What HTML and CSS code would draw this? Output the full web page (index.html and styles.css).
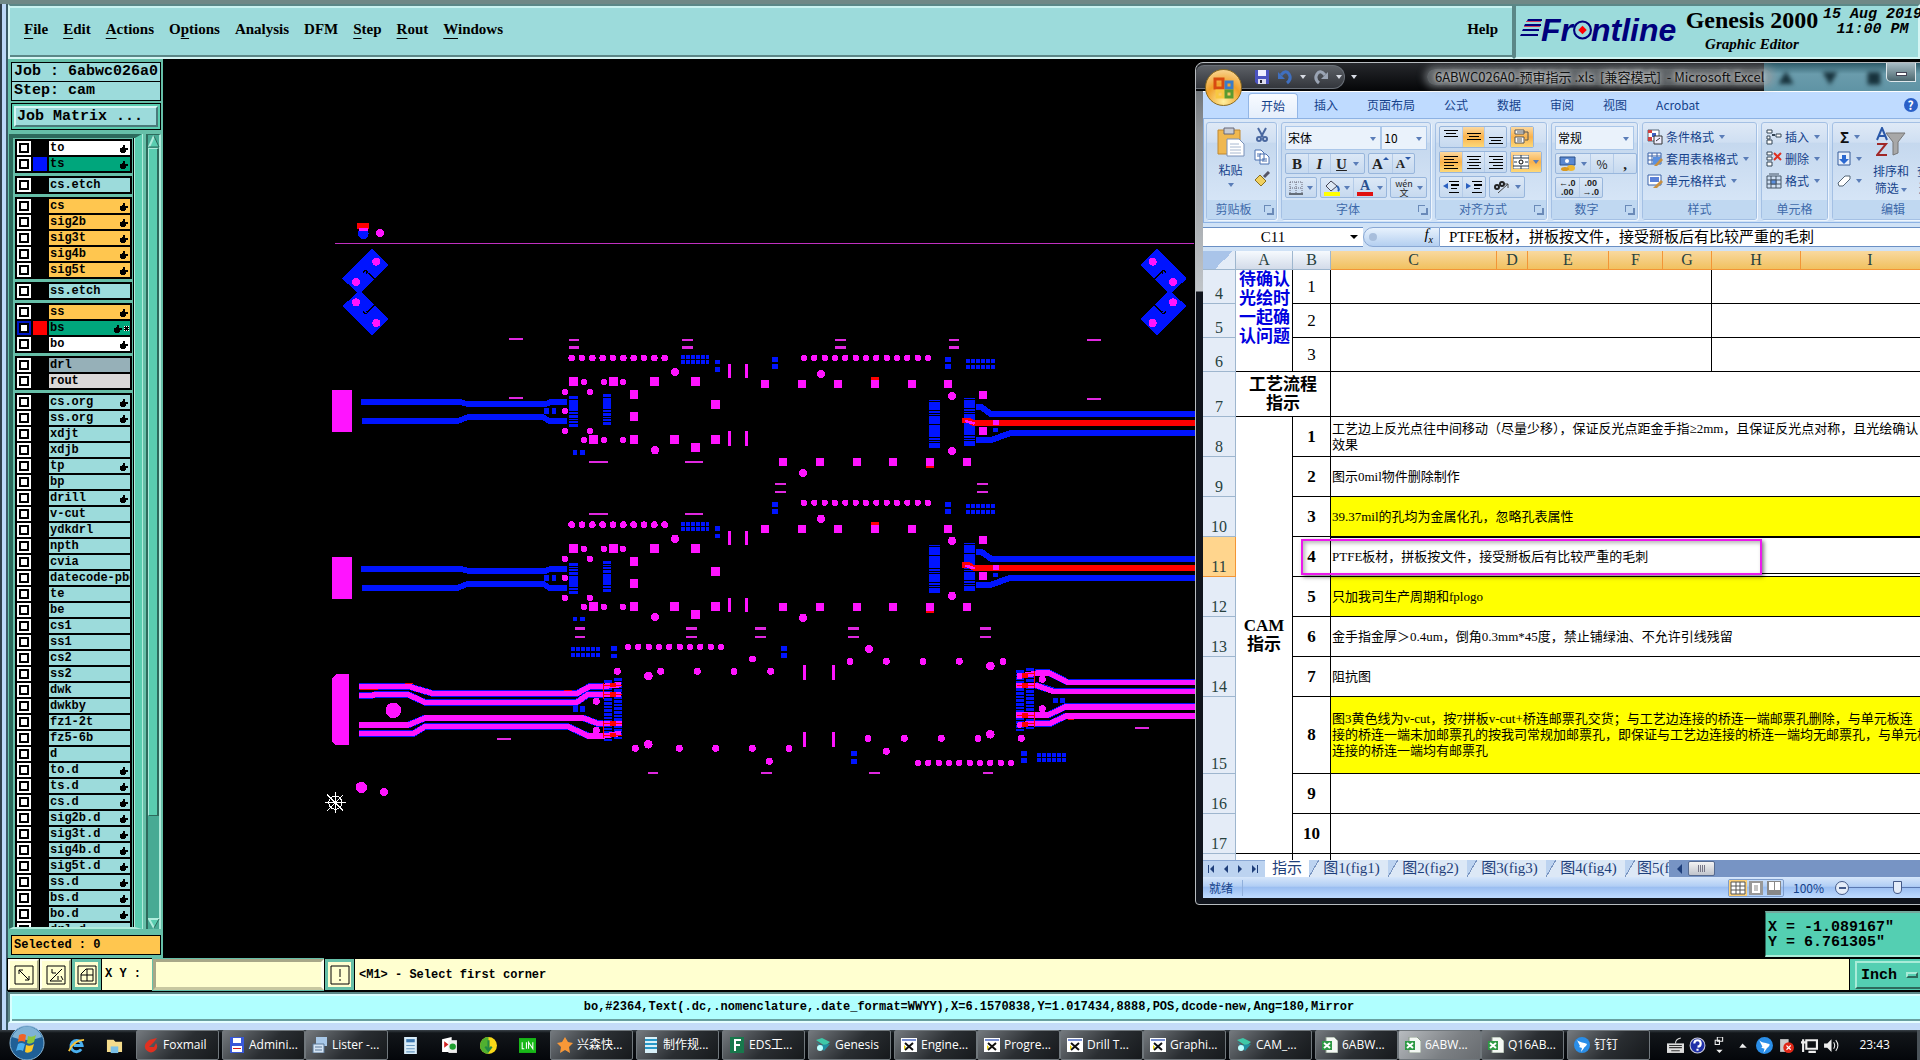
FILE: index.html
```html
<!DOCTYPE html>
<html lang="zh-CN">
<head>
  <meta charset="UTF-8">
  <meta name="viewport" content="width=device-width, initial-scale=1.0">
  <title>Genesis 2000 - Graphic Editor</title>
  <link rel="stylesheet" href="styles.css">
</head>
<body>

  <!-- shared icons -->
  <svg class="defs" aria-hidden="true">
    <symbol id="hand" viewBox="0 0 8 8"><path d="M0 3h2V2h1V0h2v3h3v2H6v2H5v1H1V7H0z"/></symbol>
    <symbol id="rows" viewBox="0 0 14 8"><path d="M0 0h14v1H0zM2 3h10v1H2zM0 6h14v1H0z"/></symbol>
    <symbol id="lines-l" viewBox="0 0 14 13"><path d="M0 0h14v1H0zM0 3h10v1H0zM0 6h14v1H0zM0 9h10v1H0zM0 12h14v1H0z"/></symbol>
    <symbol id="lines-c" viewBox="0 0 14 13"><path d="M0 0h14v1H0zM2 3h10v1H2zM0 6h14v1H0zM2 9h10v1H2zM0 12h14v1H0z"/></symbol>
    <symbol id="lines-r" viewBox="0 0 14 13"><path d="M0 0h14v1H0zM4 3h10v1H4zM0 6h14v1H0zM4 9h10v1H4zM0 12h14v1H0z"/></symbol>
    <symbol id="xls" viewBox="0 0 16 16"><path d="M4 0h8l4 4v12H4z" fill="#f4f8f4" stroke="#8a9a8a"/><path d="M0 4h10v9H0z" fill="#2f9a45"/><path d="M2 6l6 5M8 6l-6 5" stroke="#fff" stroke-width="2"/></symbol>
    <symbol id="xwin" viewBox="0 0 16 16"><path d="M0 1h16v14H0z" fill="#fff"/><path d="M1 2h14v2H1z" fill="#7a8fd0"/><path d="M4 6l8 7M12 6l-8 7" stroke="#111" stroke-width="2"/><path d="M3 8l2 2-2 3z" fill="#e8d000"/></symbol>
    <symbol id="bird" viewBox="0 0 16 16"><circle cx="8" cy="8" r="8" fill="#2a8ee8"/><path d="M3 3c3 3 7 2 10 4-1 3-3 3-3 4l-3 4 1-4-3-1 1-1z" fill="#fff"/></symbol>
    <symbol id="gen" viewBox="0 0 16 16"><path d="M1 3l6-2 8 4-5 4z" fill="#3fc8a8"/><path d="M1 5l5 3 9-1-6 7z" fill="#1f8fa0"/><circle cx="5" cy="11" r="3" fill="#bff"/></symbol>
  </svg>

  <div class="app">
    <header class="top">
      <nav class="menubar">
        <button><u>F</u>ile</button>
        <button><u>E</u>dit</button>
        <button><u>A</u>ctions</button>
        <button>O<u>p</u>tions</button>
        <button>Analysis</button>
        <button>DFM</button>
        <button><u>S</u>tep</button>
        <button><u>R</u>out</button>
        <button><u>W</u>indows</button>
        <button class="help">Help</button>
      </nav>
      <div class="brand">
        <div class="logo">
          <svg width="22" height="24" viewBox="0 0 22 24"><path d="M8 1h14v2H7zM5 6h16v2H4zM3 11h16v2H2zM1 16h17v2H0z" fill="#00007c"/><path d="M6 3h15v1H6zM4 8h16v1H4z" fill="#d04060"/></svg>
          <span>Fr</span><svg width="19" height="22" viewBox="0 0 18 20"><circle cx="9" cy="10" r="8" fill="none" stroke="#00007c" stroke-width="2"/><path d="M9 6l4 4-4 4-4-4z" fill="#f00"/></svg><span>ntline</span>
        </div>
        <div class="product"><strong>Genesis 2000</strong><em>Graphic Editor</em></div>
        <div class="date">15 Aug 2019<br>11:00 PM</div>
      </div>
    </header>

    <div class="workspace">
      <aside class="sidebar">
        <div class="info">Job : 6abwc026a0</div>
        <div class="info">Step: cam</div>
        <div class="matrix"><button>Job Matrix ...</button></div>
        <div class="layers">
          <div class="list">
            <div class="group">
              <label class="row white"><input type="checkbox"><i></i><span>to</span><svg><use href="#hand"/></svg></label>
              <label class="row green"><input type="checkbox"><i class="blue"></i><span>ts</span><svg><use href="#hand"/></svg></label>
            </div>
            <div class="group">
              <label class="row"><input type="checkbox"><i></i><span>cs.etch</span></label>
            </div>
            <div class="group">
              <label class="row gold"><input type="checkbox"><i></i><span>cs</span><svg><use href="#hand"/></svg></label>
              <label class="row gold"><input type="checkbox"><i></i><span>sig2b</span><svg><use href="#hand"/></svg></label>
              <label class="row gold"><input type="checkbox"><i></i><span>sig3t</span><svg><use href="#hand"/></svg></label>
              <label class="row gold"><input type="checkbox"><i></i><span>sig4b</span><svg><use href="#hand"/></svg></label>
              <label class="row gold"><input type="checkbox"><i></i><span>sig5t</span><svg><use href="#hand"/></svg></label>
            </div>
            <div class="group">
              <label class="row"><input type="checkbox"><i></i><span>ss.etch</span></label>
            </div>
            <div class="group">
              <label class="row gold"><input type="checkbox"><i></i><span>ss</span><svg><use href="#hand"/></svg></label>
              <label class="row green work"><input type="checkbox"><i class="red"></i><span>bs</span><svg><use href="#hand"/></svg><b></b></label>
              <label class="row white"><input type="checkbox"><i></i><span>bo</span><svg><use href="#hand"/></svg></label>
            </div>
            <div class="group">
              <label class="row slate"><input type="checkbox"><i></i><span>drl</span></label>
              <label class="row grey"><input type="checkbox"><i></i><span>rout</span></label>
            </div>
            <div class="group">
              <label class="row"><input type="checkbox"><i></i><span>cs.org</span><svg><use href="#hand"/></svg></label>
              <label class="row"><input type="checkbox"><i></i><span>ss.org</span><svg><use href="#hand"/></svg></label>
              <label class="row"><input type="checkbox"><i></i><span>xdjt</span></label>
              <label class="row"><input type="checkbox"><i></i><span>xdjb</span></label>
              <label class="row"><input type="checkbox"><i></i><span>tp</span><svg><use href="#hand"/></svg></label>
              <label class="row"><input type="checkbox"><i></i><span>bp</span></label>
              <label class="row"><input type="checkbox"><i></i><span>drill</span><svg><use href="#hand"/></svg></label>
              <label class="row"><input type="checkbox"><i></i><span>v-cut</span></label>
              <label class="row"><input type="checkbox"><i></i><span>ydkdrl</span></label>
              <label class="row"><input type="checkbox"><i></i><span>npth</span></label>
              <label class="row"><input type="checkbox"><i></i><span>cvia</span></label>
              <label class="row"><input type="checkbox"><i></i><span>datecode-pbo</span></label>
              <label class="row"><input type="checkbox"><i></i><span>te</span></label>
              <label class="row"><input type="checkbox"><i></i><span>be</span></label>
              <label class="row"><input type="checkbox"><i></i><span>cs1</span></label>
              <label class="row"><input type="checkbox"><i></i><span>ss1</span></label>
              <label class="row"><input type="checkbox"><i></i><span>cs2</span></label>
              <label class="row"><input type="checkbox"><i></i><span>ss2</span></label>
              <label class="row"><input type="checkbox"><i></i><span>dwk</span></label>
              <label class="row"><input type="checkbox"><i></i><span>dwkby</span></label>
              <label class="row"><input type="checkbox"><i></i><span>fz1-2t</span></label>
              <label class="row"><input type="checkbox"><i></i><span>fz5-6b</span></label>
              <label class="row"><input type="checkbox"><i></i><span>d</span></label>
              <label class="row"><input type="checkbox"><i></i><span>to.d</span><svg><use href="#hand"/></svg></label>
              <label class="row"><input type="checkbox"><i></i><span>ts.d</span><svg><use href="#hand"/></svg></label>
              <label class="row"><input type="checkbox"><i></i><span>cs.d</span><svg><use href="#hand"/></svg></label>
              <label class="row"><input type="checkbox"><i></i><span>sig2b.d</span><svg><use href="#hand"/></svg></label>
              <label class="row"><input type="checkbox"><i></i><span>sig3t.d</span><svg><use href="#hand"/></svg></label>
              <label class="row"><input type="checkbox"><i></i><span>sig4b.d</span><svg><use href="#hand"/></svg></label>
              <label class="row"><input type="checkbox"><i></i><span>sig5t.d</span><svg><use href="#hand"/></svg></label>
              <label class="row"><input type="checkbox"><i></i><span>ss.d</span><svg><use href="#hand"/></svg></label>
              <label class="row"><input type="checkbox"><i></i><span>bs.d</span><svg><use href="#hand"/></svg></label>
              <label class="row"><input type="checkbox"><i></i><span>bo.d</span><svg><use href="#hand"/></svg></label>
              <label class="row"><input type="checkbox"><i></i><span>drl.d</span><svg><use href="#hand"/></svg></label>
            </div>
          </div>
          <div class="scroll">
            <svg width="12" height="13" viewBox="0 0 12 13"><path d="M6 1l5 11H1z" fill="#5acdb0"/><path d="M6 1L1 12" stroke="#b0ecdc" stroke-width="2"/><path d="M6 1l5 11H1" fill="none" stroke="#2d6a5c"/></svg>
            <div class="thumb"></div>
            <div class="trough"></div>
            <svg width="12" height="11" viewBox="0 0 12 11"><path d="M1 1h10L6 10z" fill="#5acdb0"/><path d="M11 1H1l5 9" fill="none" stroke="#b0ecdc" stroke-width="2"/><path d="M11 1L6 10" stroke="#2d6a5c"/></svg>
          </div>
        </div>
        <div class="info selected">Selected : 0</div>
      </aside>

      <!-- board, three drawing units to one pixel -->
      <main class="canvas">
        <svg viewBox="-471 -456 5271 2694" preserveAspectRatio="xMinYMin meet" shape-rendering="crispEdges" fill="none" stroke="#ff14ff">
          <defs>
            <g id="left-unit">
              <path d="M36 537h60v126H36z" fill="#ff14ff" stroke="none"/>
              <g stroke="#0014ff">
                <path d="M123 573H420l22 6H678l14-6H741M126 630H414l30-12H669l18 12H741" stroke-width="17"/>
                <path d="M1083 438h84M1083 453h84" stroke-width="12" stroke-dasharray="12 3"/>
                <path d="M760 555v93M861 549v96" stroke-width="25" stroke-dasharray="10 2 5 2 7 2"/>
                <path d="M672 600h15M696 600h12" stroke-width="18"/>
                <path d="M759 724h12M780 724h15M1185 453h15M1185 475h15" stroke-width="14"/>
              </g>
              <path d="M755 441h280" stroke-width="20" stroke-linecap="round" stroke-dasharray="0 31"/>
              <path d="M1065 483h0M1005 718h0" stroke-width="25" stroke-linecap="round"/>
              <path d="M792 513h0M852 513h0M909 513h0M735 543h0M810 543h0M735 600h0M735 660h0M810 660h0M792 687h0M852 687h0M909 687h0" stroke-width="19" stroke-linecap="round"/>
              <path d="M746 511h27M867 511h27M990 511h27M1113 511h27M930 550h24M930 616h24M1173 580h27M807 685h27M930 685h24M1050 685h27M1173 685h27M1113 710h27" stroke-width="27"/>
              <path d="M1228 459v42M1280 459v42M1228 660v44M1280 660v44" stroke-width="8"/>
            </g>
            <g id="right-unit">
              <g stroke="#0014ff">
                <path d="M678 450h90M678 468h90" stroke-width="12" stroke-dasharray="12 3"/>
                <path d="M96 446h18M96 466h18M615 446h18M615 466h18" stroke-width="15"/>
                <path d="M583 567v144M689 561v144" stroke-width="32" stroke-dasharray="4 2 24 3 6 2"/>
                <path d="M708 588h15l30 21H1380M708 687h45l60-21H1380" stroke-width="18"/>
                <path d="M759 657h15" stroke-width="12"/>
              </g>
              <path d="M666 628h20l14 8H1380" stroke="#f00" stroke-width="17"/>
              <path d="M393 503h24M558 765h24" stroke="#f00" stroke-width="11"/>
              <path d="M676 630l28 8" stroke-width="8"/>
              <path d="M192 441h374" stroke-width="19" stroke-linecap="round" stroke-dasharray="0 31"/>
              <path d="M243 489h0M636 555h0M636 720h0M189 786h0" stroke-width="25" stroke-linecap="round"/>
              <path d="M63 519h24M174 519h24M282 519h24M393 519h24M504 519h24M612 519h24M717 552h24M717 660h24M117 753h24M228 753h24M339 753h24M447 753h24M558 753h24M669 753h24" stroke-width="24"/>
              <path d="M759 634h18" stroke-width="15"/>
            </g>
            <g id="coupon">
              <path d="M156 113l50 50-89 87-50-47zM118 238l88 87-50 50-89-89z" fill="#0014ff" stroke="none"/>
              <path d="M131 187q0-10 8-8q6 4 0 8M142 184l28 26M131 300q0 10 8 8q6-4 0-8M142 304l28-28" stroke="#000" stroke-width="4"/>
              <path d="M169 152h0M108 213h0M108 274h0M169 336h0" stroke-width="24" stroke-linecap="round"/>
            </g>
          </defs>

          <path d="M111 37h36v18h-36z" fill="#f00" stroke="none"/>
          <circle cx="130" cy="68" r="16" fill="#0014ff" stroke="none"/>
          <path d="M120 55h20" stroke-width="9" stroke-linecap="round"/>
          <path d="M180 66h0" stroke-width="25" stroke-linecap="round"/>
          <path d="M45 97H2622" stroke="#c030c0" stroke-width="3"/>
          <use href="#coupon"/>
          <use href="#coupon" transform="translate(2667 0) scale(-1 1)"/>

          <use href="#left-unit"/>
          <use href="#left-unit" y="500"/>
          <use href="#right-unit" x="1260"/>
          <use href="#right-unit" x="1260" y="434"/>

          <path d="M567 384h42M567 561h42M747 387h30M747 409h30M1086 386h33M1086 409h33M807 753h57M1095 753h54
            M1545 386h33M1545 409h33M1887 386h30M1887 409h30M2301 386h42M2301 563h42M1365 819h33M1971 819h33
            M1365 843h33M1971 843h33M1305 1252h33M1305 1277h33M1584 1252h33M1584 1277h33M1980 1252h33M1980 1277h33
            M2445 1551h42M1323 1686h33M1647 1686h33M1989 1686h30
            M807 909h57M1095 909h54M765 1252h30M765 1277h30M1098 1252h33M1098 1277h33M531 1583h42M984 1686h30" stroke="#e028e0" stroke-width="7"/>

          <!-- third unit, left half -->
          <g transform="translate(0 840)">
            <path d="M36 562l14-13h37v213H46l-10-12z" fill="#ff14ff" stroke="none"/>
            <g stroke="#0014ff">
              <path d="M753 474h90M753 492h90" stroke-width="12" stroke-dasharray="12 3"/>
              <path d="M873 473h18M873 495h18" stroke-width="14"/>
              <path d="M864 567v183M894 561v183" stroke-width="24" stroke-dasharray="8 3"/>
              <path d="M759 654h15M780 654h15" stroke-width="18"/>
              <path d="M117 586H265l75 22H770l40-22h38M117 614h30l20-3h98l50 23H770l35-24h43M117 702H265l50-21H790l45 17h13M117 728H280l35-21H745l60 28h43" stroke-width="20"/>
            </g>
            <path d="M117 586H265l75 22H770l40-22h40l53-5M117 614h30l20-3h98l50 23H770l35-24h98M117 702H265l50-21H790l45 17h70M117 728H280l35-21H745l60 28h45l53-8" stroke-width="16"/>
            <path d="M870 582h18M870 611h18M870 698h18M870 732h18" stroke="#f00" stroke-width="14"/>
            <path d="M850 576v48M850 690v50M850 582h55M850 611h55M850 698h55M850 732h55M120 596h54M255 577h24M732 598h24" stroke="#f00" stroke-width="3"/>
            <path d="M924 468h280" stroke-width="19" stroke-linecap="round" stroke-dasharray="0 31"/>
            <path d="M892 541h0M1022 541h0M1132 541h0M1242 541h0M1297 504h0M829 631h0M829 718h0M946 772h0M1078 772h0M1187 772h0M1297 772h0" stroke-width="21" stroke-linecap="round"/>
            <path d="M985 555h0M985 760h0M192 903h0" stroke-width="26" stroke-linecap="round"/>
            <path d="M124 889h0" stroke-width="34" stroke-linecap="round"/>
            <path d="M220 658h0" stroke-width="47" stroke-linecap="round"/>
            <g stroke="#fff" stroke-width="3"><circle cx="46" cy="935" r="20"/><path d="M15 935h62M46 904v62M22 911l48 48M70 911l-48 48"/></g>
          </g>

          <!-- third unit, right half -->
          <g transform="translate(1260 840)">
            <g stroke="#0014ff">
              <path d="M891 792h90M891 807h90" stroke-width="12" stroke-dasharray="12 3"/>
              <path d="M123 473h18M123 493h18M333 787h18M333 811h18M843 787h18M843 808h18M939 628h15M960 628h15" stroke-width="15"/>
              <path d="M840 537v183M870 531v183" stroke-width="24" stroke-dasharray="8 3"/>
              <path d="M886 545h40l55 28H1380M886 582l55 18H1380M886 672h40l50-25H1380M886 698h45l45-23H1380" stroke-width="20"/>
            </g>
            <path d="M832 555h10l50-9h35l55 28H1380M828 584h62l50 17H1380M828 672h97l50-24H1380M832 703l40-6h60l45-22H1380" stroke-width="16"/>
            <path d="M846 552h18M846 584h18M846 672h18M846 700h18" stroke="#f00" stroke-width="15"/>
            <path d="M884 540v50M884 662v46M830 584h54M830 672h54M850 548h34M850 697h34M984 685h18" stroke="#f00" stroke-width="3"/>
            <path d="M534 816h280" stroke-width="19" stroke-linecap="round" stroke-dasharray="0 31"/>
            <path d="M92 541h0M330 511h0M439 511h0M549 511h0M658 511h0M789 511h0M907 565h0M907 653h0M384 742h0M493 742h0M604 742h0M714 742h0M844 742h0M439 781h0M147 772h0M88 811h0" stroke-width="21" stroke-linecap="round"/>
            <path d="M387 474h0M751 525h0M751 730h0" stroke-width="26" stroke-linecap="round"/>
            <path d="M193 522v45M280 522v45M193 723v45M280 723v45" stroke-width="8"/>
          </g>
        </svg>
        <div class="coords">X = -1.089167"<br>Y = 6.761305"</div>
      </main>
    </div>

    <div class="command">
      <button class="tool" aria-label="Corner to corner"><svg viewBox="0 0 20 20"><path d="M1 1h18v18H1zM5 5l10 10M5 9V5h4M15 11v4h-4"/></svg></button>
      <button class="tool" aria-label="Angle"><svg viewBox="0 0 20 20"><path d="M1 1h18v18H1zM4 16L16 4M4 16h12M6 4v4h4M12 11v4M15 11l2 4"/></svg></button>
      <button class="tool on" aria-label="Grid"><svg viewBox="0 0 20 20"><path d="M1 1h18v18H1zM4 16V9l5-5h7v12zM4 10h12M10 4v12"/></svg></button>
      <label class="xy" for="xy">X Y :</label>
      <input type="text" id="xy">
      <button class="tool on" aria-label="Confirm"><svg viewBox="0 0 20 20"><path d="M1 1h18v18H1zM10 4v8M10 14v2"/></svg></button>
      <span class="message">&lt;M1&gt; - Select first corner</span>
      <div class="unit"><button>Inch <i></i></button></div>
    </div>
    <div class="status">bo,#2364,Text(.dc,.nomenclature,.date_format=WWYY),X=6.1570838,Y=1.017434,8888,POS,dcode-new,Ang=180,Mirror</div>
  </div>

  <!-- Excel window -->
  <section class="excel">
    <div class="title">
      <div class="qat">
        <svg width="16" height="16" viewBox="0 0 16 16"><path d="M1 1h14v14H3l-2-2z" fill="#4a52c0"/><path d="M4 1h8v6H4z" fill="#eef"/><path d="M4 10h8v5H4z" fill="#dde"/><path d="M6 11h2v3H6z" fill="#223"/></svg>
        <svg width="16" height="16" viewBox="0 0 16 16"><path d="M4 6q5-6 8-1t-2 9" fill="none" stroke="#3f6fc0" stroke-width="3"/><path d="M1 3v7h7z" fill="#3f6fc0"/></svg>
        <i class="dd light"></i>
        <svg width="16" height="16" viewBox="0 0 16 16"><path d="M12 6q-5-6-8-1t2 9" fill="none" stroke="#9aa4b4" stroke-width="3"/><path d="M15 3v7H8z" fill="#9aa4b4"/></svg>
        <i class="dd light"></i>
      </div>
      <i class="dd light more"></i>
      <div class="glass"><i>▲</i><i>▼</i><i>■</i></div>
      <span class="caption">6ABWC026A0-预审指示 .xls&nbsp; [兼容模式]&nbsp; - Microsoft Excel</span>
      <button class="min" aria-label="Minimize"><i></i></button>
    </div>
    <button class="orb" aria-label="Office">
      <svg width="24" height="24" viewBox="0 0 24 24" fill="none" stroke-width="3"><path d="M3 3h8v9H3z" stroke="#d84a10"/><path d="M14 6h6v6h-6z" stroke="#3a7cc8"/><path d="M5 15h6v6H5z" stroke="#f8c840"/><path d="M14 15h6v6h-6z" stroke="#5a9a30"/></svg>
    </button>

    <nav class="tabs">
      <a class="on" href="#">开始</a><a href="#">插入</a><a href="#">页面布局</a><a href="#">公式</a><a href="#">数据</a><a href="#">审阅</a><a href="#">视图</a><a href="#">Acrobat</a>
      <span class="q">?</span>
    </nav>

    <div class="ribbon">
      <div class="panel clip">
        <div class="body">
          <button class="big">
            <svg width="28" height="30" viewBox="0 0 28 30"><path d="M1 3h22v24H1z" fill="#f0b850" stroke="#c08830"/><path d="M7 1h10v6H7z" fill="#c8ccd4" stroke="#667"/><path d="M10 12h12l5 5v12H10z" fill="#fff" stroke="#7890b8"/><path d="M13 17h9M13 20h11M13 23h11M13 26h11" stroke="#a8b8d0"/></svg>
            <span>粘贴</span><i class="dd"></i>
          </button>
          <div class="stack">
            <svg width="16" height="16" viewBox="0 0 16 16" fill="none" stroke="#4a68a0" stroke-width="2"><path d="M4 1l5 9M12 1L7 10"/><circle cx="5" cy="12" r="2"/><circle cx="11" cy="12" r="2"/></svg>
            <svg width="16" height="16" viewBox="0 0 16 16" fill="#fff" stroke="#4a70b0"><path d="M1 1h6l3 3v7H1zM6 5h6l3 3v7H6z"/><path d="M3 5h4M3 7h3M8 10h5M8 12h5"/></svg>
            <svg width="16" height="16" viewBox="0 0 16 16"><path d="M15 1l-5 5" stroke="#556" stroke-width="3"/><path d="M6 4l6 6-5 5-6-6z" fill="#f0d060" stroke="#8a7020"/></svg>
          </div>
        </div>
        <div class="name">剪贴板<i class="launch"></i></div>
      </div>

      <div class="panel font">
        <div class="body col">
          <div class="line combos">
            <label class="combo wide"><select aria-label="字体"><option>宋体</option></select></label><label class="combo"><select aria-label="字号"><option>10</option></select></label>
          </div>
          <div class="line">
            <div class="set"><button class="b">B</button><button class="i">I</button><button class="u">U<i class="dd"></i></button></div>
            <div class="set"><button class="serif">A<i class="up"></i></button><button class="serif small">A<i class="up down"></i></button></div>
          </div>
          <div class="line">
            <div class="set"><button aria-label="边框"><svg width="14" height="14" viewBox="0 0 14 14"><path d="M1 1h12M1 7h12M1 1v12M7 1v12M13 1v12" stroke="#667" stroke-dasharray="1 1"/><path d="M0 13h14" stroke="#000"/></svg><i class="dd"></i></button></div>
            <div class="set"><button aria-label="填充颜色"><svg width="16" height="16" viewBox="0 0 16 16"><path d="M7 1l6 5-6 5-5-5z" fill="#dde8f4" stroke="#445"/><path d="M13 6q3 3 1 5" stroke="#2a60b0" stroke-width="2" fill="none"/><path d="M0 12h16v4H0z" fill="#ff0"/></svg><i class="dd"></i></button><button class="ink"><span>A</span><i class="dd"></i></button></div>
            <div class="set"><button class="wen"><span>wén</span><span>文</span><i class="dd"></i></button></div>
          </div>
        </div>
        <div class="name">字体<i class="launch"></i></div>
      </div>

      <div class="panel align">
        <div class="body col">
          <div class="line">
            <div class="set"><button class="at-top" aria-label="顶端对齐"><svg class="rows"><use href="#rows"/></svg></button><button class="hot" aria-label="垂直居中"><svg class="rows"><use href="#rows"/></svg></button><button class="at-bottom" aria-label="底端对齐"><svg class="rows"><use href="#rows"/></svg></button></div>
            <div class="set"><button class="hot" aria-label="自动换行"><svg width="16" height="16" viewBox="0 0 16 16" fill="none" stroke="#555"><path d="M1 1h9v4H1zM1 8h9v6H1z" fill="#fff"/><path d="M3 3h11v8h-3M3 10h5M3 12h5"/></svg></button></div>
          </div>
          <div class="line">
            <div class="set"><button class="hot" aria-label="左对齐"><svg class="al"><use href="#lines-l"/></svg></button><button aria-label="居中"><svg class="al"><use href="#lines-c"/></svg></button><button aria-label="右对齐"><svg class="al"><use href="#lines-r"/></svg></button></div>
            <div class="set"><button class="hot merge" aria-label="合并"><svg width="16" height="14" viewBox="0 0 16 14"><path d="M0 0h16v14H0z" fill="#fff" stroke="#567"/><path d="M0 3h16M0 11h16M8 0v3M8 11v3M1 7h3M12 7h3" stroke="#234"/><circle cx="8" cy="7" r="2" fill="none" stroke="#000"/></svg><i class="dd"></i></button></div>
          </div>
          <div class="line">
            <div class="set"><button aria-label="减少缩进"><svg width="16" height="12" viewBox="0 0 16 12"><path d="M6 0h10v1H6zM8 3h8v2H8zM8 7h6v1H8zM6 11h10v1H6z"/><path d="M0 5l5-3v6z" fill="#2a60c0"/></svg></button><button aria-label="增加缩进"><svg width="16" height="12" viewBox="0 0 16 12"><path d="M6 0h10v1H6zM8 3h8v2H8zM8 7h6v1H8zM6 11h10v1H6z"/><path d="M5 5L0 2v6z" fill="#2a60c0"/></svg></button></div>
            <div class="set"><button class="serif small" aria-label="方向"><svg width="18" height="16" viewBox="0 0 18 16"><path d="M5 14L15 5M15 9V5h-4" stroke="#444" fill="none"/><circle cx="4" cy="8" r="2" fill="none" stroke="#222" stroke-width="2"/><circle cx="9" cy="5" r="2" fill="none" stroke="#222" stroke-width="2"/></svg><i class="dd"></i></button></div>
          </div>
        </div>
        <div class="name">对齐方式<i class="launch"></i></div>
      </div>

      <div class="panel number">
        <div class="body col">
          <div class="line combos"><label class="combo full"><select aria-label="数字格式"><option>常规</option></select></label></div>
          <div class="line"><div class="set"><button aria-label="货币"><svg width="18" height="16" viewBox="0 0 18 16"><path d="M1 1h15v8H1z" fill="#5a88d0" stroke="#2a508a"/><circle cx="8" cy="5" r="2" fill="#fff"/><ellipse cx="12" cy="12" rx="4" ry="3" fill="#f0b830"/><ellipse cx="6" cy="13" rx="4" ry="2" fill="#d89820"/></svg><i class="dd"></i></button><button class="pc">%</button><button class="b">,</button></div></div>
          <div class="line"><div class="set tiny"><button><span>←.0<br>.00</span></button><button><span>.00<br>→.0</span></button></div></div>
        </div>
        <div class="name">数字<i class="launch"></i></div>
      </div>

      <div class="panel styles">
        <div class="body col cmds">
          <button><svg width="16" height="16" viewBox="0 0 16 16"><path d="M1 1h11v11H1z" fill="#fff" stroke="#567"/><path d="M1 1h4v3H1zM1 8h4v4H1z" fill="#d04040"/><path d="M5 4h4v4H5z" fill="#4060c0"/><path d="M7 7h8v8H7z" fill="#eef" stroke="#333"/><path d="M9 12l4-3" stroke="#333"/></svg>条件格式<i class="dd"></i></button>
          <button><svg width="16" height="16" viewBox="0 0 16 16"><path d="M1 2h13v11H1z" fill="#fff" stroke="#3a62a8"/><path d="M1 5h13M1 9h13M5 2v11M10 2v11" stroke="#3a62a8"/><path d="M6 6h8v7H6z" fill="#5a90e0"/><path d="M7 15l7-8 2 2-6 6z" fill="#c89040"/></svg>套用表格格式<i class="dd"></i></button>
          <button><svg width="16" height="16" viewBox="0 0 16 16"><path d="M1 2h13v10H1z" fill="#fff" stroke="#3a62a8"/><path d="M3 4h9v5H3z" fill="#5a80d8"/><path d="M6 15l8-8 2 2-6 6z" fill="#c89040"/></svg>单元格样式<i class="dd"></i></button>
        </div>
        <div class="name">样式</div>
      </div>

      <div class="panel cells">
        <div class="body col cmds">
          <button><svg width="16" height="16" viewBox="0 0 16 16" fill="#fff" stroke="#345"><path d="M1 1h5v3H1zM1 11h5v4H1zM1 7h3v3H1zM10 5h5v3h-5z"/><path d="M9 6H6" stroke-width="2"/></svg>插入<i class="dd"></i></button>
          <button><svg width="16" height="16" viewBox="0 0 16 16" fill="#fff" stroke="#345"><path d="M1 1h5v3H1zM1 11h5v4H1zM1 6h5v3H1z"/><path d="M8 2l7 7M15 2L8 9" stroke="#e03020" stroke-width="2"/></svg>删除<i class="dd"></i></button>
          <button><svg width="16" height="16" viewBox="0 0 16 16" fill="none" stroke="#456"><path d="M1 3h14v12H1zM1 7h14M1 11h14M5 3v12M10 3v12M3 1h10"/><path d="M5 7h5v4H5z" fill="#5a90e0"/></svg>格式<i class="dd"></i></button>
        </div>
        <div class="name">单元格</div>
      </div>

      <div class="panel edit">
        <div class="body">
          <div class="cmds col">
            <button class="b">Σ<i class="dd"></i></button>
            <button aria-label="填充"><svg width="14" height="16" viewBox="0 0 14 16"><path d="M1 1h12v13H1z" fill="#e8f0fc" stroke="#345a98"/><path d="M5 4h4v4h3l-5 5-5-5h3z" fill="#2a68d0"/></svg><i class="dd"></i></button>
            <button aria-label="清除"><svg width="14" height="12" viewBox="0 0 14 12"><path d="M1 8l7-7h5v3l-7 7H2z" fill="#fff" stroke="#567"/></svg><i class="dd"></i></button>
          </div>
          <button class="big sort"><svg width="30" height="30" viewBox="0 0 30 30"><path d="M1 13L6 1l5 12M3 9h6" fill="none" stroke="#2a58a8" stroke-width="2"/><path d="M1 17h9L1 28h10" fill="none" stroke="#a02828" stroke-width="2"/><path d="M10 6h19l-7 9v11l-5 2V15z" fill="#a8a8a8" stroke="#777"/></svg><span>排序和<br>筛选 <i class="dd"></i></span></button>
          <button class="big sort"><svg width="30" height="30" viewBox="0 0 30 30"><path d="M4 14h9v14H2zM6 6h6v8H5z" fill="#b8cdf0" stroke="#5a78b8"/><path d="M17 14h9l2 14H17zM18 6h6v8h-6z" fill="#b8cdf0" stroke="#5a78b8"/></svg><span>查找和<br>选择 <i class="dd"></i></span></button>
        </div>
        <div class="name">编辑</div>
      </div>
    </div>

    <div class="formula">
      <span class="ref">C11<i></i></span>
      <span class="fx"><i></i><em>f<sub>x</sub></em></span>
      <input type="text" aria-label="编辑栏" value="PTFE板材，拼板按文件，接受掰板后有比较严重的毛刺">
    </div>

    <div class="sheet">
      <table>
        <colgroup><col class="c0"><col class="ca"><col class="cb"><col class="cc"><col class="cd"><col class="ce"><col class="cf"><col class="cg"><col class="ch"><col class="ci"></colgroup>
        <thead>
          <tr><th class="corner"></th><th>A</th><th>B</th><th class="sel">C</th><th class="sel">D</th><th class="sel">E</th><th class="sel">F</th><th class="sel">G</th><th class="sel">H</th><th class="sel">I</th></tr>
        </thead>
        <tbody>
          <tr class="h34"><th>4</th><td rowspan="3" class="confirm">待确认光绘时一起确认问题</td><td class="num plain">1</td><td colspan="5"></td><td colspan="2"></td></tr>
          <tr class="h34"><th>5</th><td class="num plain">2</td><td colspan="5"></td><td colspan="2"></td></tr>
          <tr class="h34"><th>6</th><td class="num plain">3</td><td colspan="5"></td><td colspan="2"></td></tr>
          <tr class="h45"><th>7</th><td colspan="2" class="head">工艺流程<br>指示</td><td colspan="7"></td></tr>
          <tr class="h40"><th>8</th><td rowspan="10" class="head">CAM<br>指示</td><td class="num">1</td><td colspan="7">工艺边上反光点往中间移动（尽量少移），保证反光点距金手指≥2mm，且保证反光点对称，且光绘确认<br>效果</td></tr>
          <tr class="h40"><th>9</th><td class="num">2</td><td colspan="7">图示0mil物件删除制作</td></tr>
          <tr class="h40"><th>10</th><td class="num">3</td><td colspan="7" class="mark">39.37mil的孔均为金属化孔，忽略孔表属性</td></tr>
          <tr class="h40"><th class="sel">11</th><td class="num">4</td><td colspan="7" class="active">PTFE板材，拼板按文件，接受掰板后有比较严重的毛刺</td></tr>
          <tr class="h40"><th>12</th><td class="num">5</td><td colspan="7" class="mark">只加我司生产周期和fplogo</td></tr>
          <tr class="h40"><th>13</th><td class="num">6</td><td colspan="7">金手指金厚＞0.4um，倒角0.3mm*45度，禁止铺绿油、不允许引线残留</td></tr>
          <tr class="h40"><th>14</th><td class="num">7</td><td colspan="7">阻抗图</td></tr>
          <tr class="h77"><th>15</th><td class="num">8</td><td colspan="7" class="mark">图3黄色线为v-cut，按7拼板v-cut+桥连邮票孔交货；与工艺边连接的桥连一端邮票孔删除，与单元板连<br>接的桥连一端未加邮票孔的按我司常规加邮票孔，即保证与工艺边连接的桥连一端均无邮票孔，与单元板<br>连接的桥连一端均有邮票孔</td></tr>
          <tr class="h40"><th>16</th><td class="num">9</td><td colspan="7"></td></tr>
          <tr class="h40"><th>17</th><td class="num">10</td><td colspan="7"></td></tr>
          <tr class="h6"><th></th><td></td><td></td><td colspan="7"></td></tr>
        </tbody>
      </table>
      <div class="note"></div>
    </div>

    <div class="sheettabs">
      <div class="arrows">
        <svg width="56" height="8" viewBox="0 0 56 8" fill="#1f3f7a"><path d="M0 0h1v8H0zM6 0v8L2 4zM20 0v8l-4-4zM30 0v8l4-4zM44 0v8l4-4zM49 0h1v8h-1z"/></svg>
      </div>
      <a class="on" href="#">指示</a><a href="#">图1(fig1)</a><a href="#">图2(fig2)</a><a href="#">图3(fig3)</a><a href="#">图4(fig4)</a><a class="cut" href="#">图5(fig5)</a>
      <div class="hscroll"><i class="la"></i><i class="knob"></i></div>
    </div>
    <div class="xlstatus">
      <span class="ready">就绪</span>
      <div class="views">
        <svg width="18" height="16" viewBox="0 0 18 16"><path d="M2 2h14v12H2z" fill="#fff" stroke="#555"/><path d="M2 6h14M2 10h14M7 2v12M11 2v12" stroke="#555"/></svg>
        <svg width="18" height="16" viewBox="0 0 18 16"><path d="M2 1h14v14H2z" fill="#999"/><path d="M5 3h8v10H5z" fill="#fff"/><path d="M7 6h4M7 8h4M7 10h4" stroke="#888"/></svg>
        <svg width="18" height="16" viewBox="0 0 18 16"><path d="M2 1h14v14H2z" fill="#888"/><path d="M4 2h5v8H4zM10 2h5v8h-5z" fill="#fff"/></svg>
      </div>
      <label for="zoom">100%</label>
      <span class="minus"></span>
      <input type="range" id="zoom" min="10" max="400" value="165">
    </div>
  </section>

  <!-- taskbar -->
  <footer class="taskbar">
    <button class="start" aria-label="开始">
      <svg width="38" height="36" viewBox="0 0 38 36"><circle cx="19" cy="18" r="17" fill="#1f5f96" stroke="#8ab8d8"/><path d="M4 12a16 16 0 0 1 30 0q-15 6-30 0z" fill="#7fb2d4"/><path d="M11 10q4-2 7 0l-1 7q-4-2-7 0z" fill="#f06428"/><path d="M20 11q4 2 8-1l-2 7q-4 3-7 1z" fill="#8cc83c"/><path d="M10 19q3-2 7 0l-2 7q-3-2-7 0z" fill="#4ab0f0"/><path d="M18 20q4 2 8-1l-2 7q-4 3-7 1z" fill="#fcc828"/></svg>
    </button>
    <div class="quick two">
      <svg width="18" height="18" viewBox="0 0 18 18"><path d="M14 13a6 6 0 1 1 1-4H6" fill="none" stroke="#4ab0f0" stroke-width="3"/><path d="M1 15Q6 3 17 3" fill="none" stroke="#f8c840" stroke-width="2"/></svg>
      <svg width="18" height="18" viewBox="0 0 18 18"><path d="M1 3h7l2 2h7v11H1z" fill="#f4dc8c"/><path d="M5 10h8v7H5z" fill="#7ac0e8"/></svg>
    </div>
    <div class="tasks"><button><svg><path d="M3 6a6 6 0 1 0 10 0l-2 4H6l5-5 3-4-8 2z" fill="#e03020"/></svg>Foxmail</button></div>
    <div class="tasks">
      <button><svg><path d="M1 0h14v16H1z" fill="#3858d8"/><path d="M4 1h8v5H4zM3 9h10v6H3z" fill="#fff"/><path d="M4 11h8v1H4z" fill="#d02020"/></svg>Admini...</button>
      <button><svg><path d="M4 0h11v9H4z" fill="#a8c8e8"/><path d="M1 7h11v9H1z" fill="#d4e4f4" stroke="#5a7898"/><path d="M3 10h7M3 13h7" stroke="#5a7898"/></svg>Lister -...</button>
    </div>
    <div class="quick">
      <svg viewBox="0 0 16 16"><path d="M2 0h12v16H2z" fill="#d8ecf8"/><path d="M4 2h8v3H4z" fill="#3c78b0"/><path d="M4 8h8M4 11h8M4 14h8" stroke="#6898c0"/></svg>
      <svg viewBox="0 0 16 16"><path d="M1 2l9-2v14H1z" fill="#fff"/><path d="M7 3h8v12H7z" fill="#eee"/><path d="M3 4l4 3-4 3z" fill="#d02020"/><circle cx="11" cy="9" r="3" fill="#20a030"/></svg>
      <svg viewBox="0 0 16 16"><circle cx="8" cy="8" r="8" fill="#f8d818"/><path d="M8 0a8 8 0 0 0 0 16z" fill="#50b030"/><path d="M8 3v9M5 9l3 4 3-4" stroke="#284" stroke-width="2" fill="none"/></svg>
      <svg viewBox="0 0 16 16"><path d="M0 1h16v14H0z" fill="#18b818"/><path d="M3 5v6h2M7 5v6M9 11V5l4 6V5" stroke="#fff" fill="none"/></svg>
    </div>
    <div class="tasks"><button><svg><path d="M8 0l3 5 5 1-4 4 1 6-5-3-5 3 1-6-4-4 5-1z" fill="#f89838"/></svg>兴森快...</button></div>
    <div class="tasks"><button><svg><path d="M2 0h12v16H2z" fill="#d8f0f8"/><path d="M2 3h12M2 7h12M2 11h12" stroke="#2898c8" stroke-width="2"/></svg>制作规...</button></div>
    <div class="tasks"><button><svg><path d="M1 0h14v16H1z" fill="#18784c"/><path d="M6 14V3h6M6 8h5" stroke="#fff" stroke-width="2" fill="none"/></svg>EDS工...</button></div>
    <div class="tasks"><button><svg><use href="#gen"/></svg>Genesis</button></div>
    <div class="tasks">
      <button><svg><use href="#xwin"/></svg>Engine...</button>
      <button><svg><use href="#xwin"/></svg>Progre...</button>
      <button><svg><use href="#xwin"/></svg>Drill T...</button>
      <button><svg><use href="#xwin"/></svg>Graphi...</button>
    </div>
    <div class="tasks"><button><svg><use href="#gen"/></svg>CAM_...</button></div>
    <div class="tasks">
      <button><svg><use href="#xls"/></svg>6ABW...</button>
      <button class="on"><svg><use href="#xls"/></svg>6ABW...</button>
      <button><svg><use href="#xls"/></svg>Q16AB...</button>
    </div>
    <div class="tasks"><button><svg><use href="#bird"/></svg>钉钉</button></div>
    <div class="tray">
      <svg viewBox="0 0 16 16"><path d="M0 6h16v9H0z" fill="#ddd"/><path d="M2 8h12M2 10h12M4 13h8" stroke="#333"/><path d="M8 6q0-4 5-5" stroke="#ddd" fill="none"/></svg>
      <svg viewBox="0 0 16 16"><circle cx="8" cy="8" r="7" fill="#2030a8" stroke="#ccd"/><path d="M5 6q0-3 3-3t3 3-3 3M8 11v2" stroke="#fff" stroke-width="2" fill="none"/></svg>
      <svg viewBox="0 0 16 16"><path d="M5 0h5v4H5zM3 3h4v4H3z" fill="none" stroke="#eee"/><path d="M4 12h6l-3 3z" fill="#eee"/></svg>
      <svg viewBox="0 0 16 16"><path d="M5 10h7L8 6z" fill="#eee"/></svg>
      <svg viewBox="0 0 16 16"><use href="#bird"/></svg>
      <svg viewBox="0 0 16 16"><path d="M2 2h8v12H2z" fill="#ccc"/><circle cx="10" cy="10" r="5" fill="#e02818"/><path d="M8 8l4 4M12 8l-4 4" stroke="#fff"/></svg>
      <svg viewBox="0 0 16 16"><path d="M5 3h10v8H5zM7 14h7M2 2v12M0 5h4" fill="none" stroke="#eee" stroke-width="2"/></svg>
      <svg viewBox="0 0 16 16"><path d="M1 6h3l4-4v12l-4-4H1z" fill="#eee"/><path d="M10 5q2 3 0 6M12 3q4 5 0 10" stroke="#eee" fill="none"/></svg>
      <time>23:43</time>
    </div>
    <div class="peek"></div>
  </footer>

</body>
</html>
```
FILE: styles.css
```css
* {
  box-sizing: border-box;
}

body {
  margin: 0;
  height: 100vh;
  display: flex;
  flex-direction: column;
  overflow: hidden;
  position: relative;
  background: #000;
  color: #000;
  font-family: "Liberation Mono", monospace;
}

button, input, select {
  font: inherit;
  color: inherit;
  margin: 0;
  padding: 0;
  border: 0;
  border-radius: 0;
  background: none;
}

a {
  color: inherit;
  text-decoration: none;
}

.defs {
  position: absolute;
  width: 0;
  height: 0;
}

/* ---------- Genesis ---------- */
.app {
  flex: 1;
  min-height: 0;
  display: flex;
  flex-direction: column;
  padding: 0 0 7px 8px;
  border-top: 4px solid #6f8886;
  background: linear-gradient(90deg, #30404c 2px, #bcd8f8 2px, #bcd8f8 6px, #3a5a66 6px, #3a5a66 8px, #c4dcf8 8px);
}

.top {
  display: flex;
  height: 55px;
}

.menubar {
  flex: 1;
  display: flex;
  align-items: center;
  gap: 15px;
  padding: 0 14px 6px;
  background: #9cdbdb;
  border: 2px solid #d4f6f4;
  border-top-color: #5b8787;
  border-right-color: #5b8787;
  box-shadow: inset 0 -2px #5b8787, inset 0 2px #c8f2f0;
  font: bold 15px/20px "Liberation Serif", serif;
}

.menubar u {
  text-underline-offset: 4px;
}

.help {
  margin-left: auto;
}

.brand {
  width: 406px;
  display: flex;
  background: #9cdbdb;
  border: 2px solid #d4f6f4;
  border-top-color: #5b8787;
  border-left-color: #5b8787;
  padding: 0 0 0 4px;
  white-space: nowrap;
}

.logo {
  display: flex;
  align-items: center;
  color: #00007c;
  font: italic bold 32px/32px "Liberation Sans", sans-serif;
  flex: none;
  width: 162px;
  padding-bottom: 4px;
}

.logo span {
  flex: none;
}

.logo svg {
  flex: none;
  margin-right: -1px;
}

.product {
  flex: none;
  width: 140px;
  text-align: center;
  font-family: "Liberation Serif", serif;
}

.product strong {
  display: block;
  font-size: 24px;
  line-height: 28px;
}

.product em {
  display: block;
  font-weight: bold;
  font-size: 15px;
  line-height: 20px;
}

.date {
  flex: none;
  font: italic bold 15px/15px "Liberation Mono", monospace;
  padding: 1px 0 0 1px;
  text-align: center;
}

.workspace {
  flex: 1;
  min-height: 0;
  display: flex;
}

.sidebar {
  width: 155px;
  display: flex;
  flex-direction: column;
  padding: 3px 2px 3px 3px;
  background: #66bfa8;
}

.info {
  height: 20px;
  border: 1px solid #000;
  background: #9cdbdb;
  padding-left: 2px;
  font-size: 15px;
  line-height: 18px;
  font-weight: bold;
  white-space: nowrap;
}

.info + .info {
  margin-top: -1px;
}

.matrix {
  margin-top: 2px;
  height: 27px;
  border: 1px solid #000;
  background: #5acdb0;
  padding: 2px;
}

.matrix button {
  width: 100%;
  height: 21px;
  border: 2px solid #d4f6f4;
  border-right-color: #4a7a7a;
  border-bottom-color: #4a7a7a;
  background: #9cdbdb;
  text-align: left;
  padding-left: 1px;
  font-size: 15px;
  line-height: 17px;
  font-weight: bold;
}

.layers {
  flex: 1;
  min-height: 0;
  display: flex;
  gap: 4px;
  margin: 4px 0 6px -2px;
}

.list {
  width: 133px;
  overflow: hidden;
  border-left: 4px solid #2d6a5c;
  border-top: 4px solid #2d6a5c;
  border-right: 7px solid #5acdb0;
  border-bottom: 2px solid #b0ecdc;
  box-shadow: 1px 0 #b0ecdc;
  padding: 1px 3px 0 2px;
  display: flex;
  flex-direction: column;
  gap: 3px;
  background: linear-gradient(90deg, #66bfa8 120px, #000 120px, #000 121px, #b0ecdc 121px);
}

.group {
  flex: none;
  background: #000;
  padding: 2px;
  display: flex;
  flex-direction: column;
  gap: 2px;
}

.row {
  display: flex;
  gap: 2px;
  height: 14px;
  position: relative;
}

.row input {
  appearance: none;
  flex: none;
  width: 14px;
  height: 14px;
  background: #fff;
  border: 2px solid #fff;
  box-shadow: inset 0 0 0 2px #000;
}

.row i {
  flex: none;
  width: 14px;
}

.row i.blue {
  background: #0014ff;
}

.row i.red {
  background: #f00;
}

.row span {
  flex: 1;
  min-width: 0;
  overflow: hidden;
  white-space: nowrap;
  padding-left: 1px;
  background: #9cdbdb;
  font-size: 12px;
  line-height: 14px;
  font-weight: bold;
}

.row svg {
  position: absolute;
  right: 2px;
  top: 4px;
  width: 8px;
  height: 8px;
}

.row.white span { background: #fff; }
.row.green span { background: #00a67c; }
.row.gold span { background: #ffc64f; }
.row.slate span { background: #96b0b8; }
.row.grey span { background: #dad8d8; }

.row.work input {
  border-color: #0018c8;
}

.row.work svg {
  right: 8px;
}

.row.work b {
  position: absolute;
  right: 1px;
  top: 5px;
  width: 5px;
  height: 5px;
  border: 1px dotted #fff;
  background: #000;
}

.scroll {
  width: 15px;
  display: flex;
  flex-direction: column;
  align-items: center;
  background: #48aa94;
  border-left: 2px solid #2d6a5c;
  border-right: 2px solid #b0ecdc;
  border-top: 1px solid #2d6a5c;
}

.thumb {
  flex: 669;
  width: 100%;
  background: #5acdb0;
  border: 1px solid #b0ecdc;
  border-right: 2px solid #2d6a5c;
  border-bottom-color: #2d6a5c;
}

.trough {
  flex: 102;
}

.info.selected {
  background: #ffc64f;
  font-size: 12px;
}

.canvas {
  flex: 1;
  min-width: 0;
  position: relative;
  background: #000;
}

.canvas > svg {
  display: block;
  width: 100%;
  height: 100%;
}

.coords {
  position: absolute;
  right: 0;
  bottom: 1px;
  width: 155px;
  height: 46px;
  padding: 7px 2px;
  background: #54cfb2;
  border-top: 2px solid #76a89c;
  border-bottom: 2px solid #a8ecd8;
  border-left: 1px solid #2d6a5c;
  font: bold 15px/15px "Liberation Mono", monospace;
}

.command {
  height: 34px;
  display: flex;
  align-items: stretch;
  gap: 1px;
  border-top: 1px solid #000;
  border-bottom: 2px solid #000;
  background: #ffffd0;
  font-size: 12px;
  font-weight: bold;
}

.tool {
  width: 31px;
  border: 2px solid #fffff0;
  border-right-color: #a8a888;
  border-bottom-color: #a8a888;
  outline: 1px solid #000;
  display: flex;
  align-items: center;
  justify-content: center;
}

.tool svg {
  width: 20px;
  height: 20px;
  fill: none;
  stroke: #000;
}

.tool.on {
  width: 29px;
  border-color: #66bfa8;
  border-width: 3px;
}

.xy {
  width: 50px;
  padding-left: 3px;
  line-height: 31px;
  white-space: nowrap;
}

.command input {
  width: 171px;
  background: #ffffd0;
  border: 3px solid #a8a888;
  border-right-color: #fffff0;
  border-bottom-color: #c8c8a0;
  outline: 1px solid #66bfa8;
}

.message {
  flex: 1;
  padding-left: 4px;
  line-height: 32px;
}

.unit {
  width: 71px;
  background: #54cfb2;
  border-left: 1px solid #000;
  padding: 2px 0 1px 5px;
}

.unit button {
  width: 72px;
  height: 100%;
  border: 2px solid #a8ecd8;
  border-bottom-color: #2d6a5c;
  text-align: left;
  padding-left: 4px;
  font-size: 15px;
  white-space: nowrap;
}

.unit i {
  display: inline-block;
  width: 12px;
  height: 6px;
  vertical-align: middle;
  border: 2px solid #a8ecd8;
  border-right-color: #2d6a5c;
  border-bottom-color: #2d6a5c;
}

.status {
  height: 31px;
  padding-left: 8px;
  background: #b0ffff;
  border: 2px solid #5b8787;
  border-bottom-color: #e4ffff;
  border-right: 0;
  box-shadow: inset 2px 2px #d8ffff, inset 0 -2px #68a0a0;
  text-align: center;
  font: bold 12px/27px "Liberation Mono", monospace;
  white-space: nowrap;
}

/* ---------- Excel ---------- */
.excel {
  position: absolute;
  left: 1195px;
  top: 62px;
  right: -60px;
  padding: 0 7px 6px;
  border: 1px solid #b8bcc0;
  border-radius: 8px 8px 4px 4px;
  background: linear-gradient(#5a5f64, #909498 70px, #c0c4c8 228px, #10141c 229px);
  font: 12px/16px "Noto Sans CJK SC", sans-serif;
  color: #15428b;
}

.title {
  height: 28px;
  margin: 0 -7px;
  display: flex;
  align-items: center;
  background: linear-gradient(#26282c, #050608);
  border-radius: 8px 0 0 0;
  position: relative;
}

.qat {
  width: 149px;
  height: 24px;
  padding-left: 58px;
  display: flex;
  align-items: center;
  gap: 7px;
  background: linear-gradient(#5c6066, #33363c);
  border: 1px solid #6a7078;
  border-left: 0;
  border-radius: 8px 12px 12px 0;
}

.dd {
  display: inline-block;
  flex: none;
  width: 0;
  height: 0;
  border: 3px solid transparent;
  border-top: 4px solid #5a7db8;
  border-bottom: 0;
}

.dd.light {
  border-top-color: #d8dce4;
}

.more {
  margin-left: 6px;
}

.caption {
  position: absolute;
  left: 239px;
  color: #111;
  font-size: 13px;
  white-space: nowrap;
  padding: 0 8px;
  margin-left: -8px;
  border-radius: 10px;
  background: rgba(150, 156, 160, 0.55);
  box-shadow: 0 0 7px 3px rgba(150, 156, 160, 0.55);
  text-shadow: 0 0 5px #fff, 0 0 8px #ccc;
}

.glass {
  position: absolute;
  left: 568px;
  right: 0;
  top: 0;
  bottom: 0;
  display: flex;
  gap: 28px;
  padding-left: 14px;
  align-items: center;
  background: linear-gradient(#2d5a68, #6a9cac 40%, #5f93a4);
  overflow: hidden;
}

.glass i {
  font-style: normal;
  font-size: 16px;
  color: #17323c;
  filter: blur(2px);
}

.min {
  position: absolute;
  left: 690px;
  top: 0;
  width: 30px;
  height: 19px;
  border: 1px solid #dfe8ec;
  border-top: 0;
  border-radius: 0 0 0 5px;
  background: linear-gradient(#a8bcc4, #4c6870);
}

.min i {
  display: block;
  width: 11px;
  height: 4px;
  margin: 4px auto 0;
  background: #fff;
  border: 1px solid #445;
}

.orb {
  position: absolute;
  left: 9px;
  top: 6px;
  width: 37px;
  height: 37px;
  z-index: 2;
  border-radius: 50%;
  border: 1px solid #8a6a20;
  background: radial-gradient(circle at 50% 90%, #fff0a0, #f0a028 50%, #fbe4b0);
  display: flex;
  align-items: center;
  justify-content: center;
}

.tabs {
  height: 27px;
  display: flex;
  align-items: flex-end;
  padding-left: 45px;
  background: #bfdbff;
  border-top: 1px solid #fff;
}

.tabs a {
  height: 25px;
  line-height: 24px;
  padding: 0 14px;
}

.tabs a + a {
  margin-left: 1px;
}

.tabs .on {
  padding: 0 12px;
  margin-right: 1px;
  background: linear-gradient(#f8fbff, #e4eefb);
  border: 1px solid #93b6e6;
  border-bottom: 0;
  border-radius: 4px 4px 0 0;
  line-height: 23px;
}

.tabs .q {
  margin: 0 0 6px 190px;
  width: 14px;
  height: 14px;
  border-radius: 50%;
  background: #2a60c8;
  color: #fff;
  font-weight: bold;
  line-height: 14px;
  text-align: center;
}

.ribbon {
  display: flex;
  gap: 4px;
  height: 105px;
  padding: 3px 2px 2px;
  background: linear-gradient(#dbe8f7, #c9dcf2 30%, #d0e2f6);
  border: 1px solid #8db2e3;
  border-right: 0;
}

.panel {
  flex: none;
  display: flex;
  flex-direction: column;
  border: 1px solid #a4c0e4;
  border-radius: 3px;
  background: linear-gradient(#dfe9f6, #cfdff2 20%, #c5d8ee 21%, #dbe9f9);
  box-shadow: 1px 1px #eef5fd;
}

.clip { width: 71px; }
.font { width: 150px; }
.align { width: 112px; }
.number { width: 87px; }
.styles { width: 115px; }
.cells { width: 67px; }
.edit { width: 170px; }

.name {
  height: 19px;
  line-height: 18px;
  padding-right: 16px;
  background: #c0d8f1;
  color: #3e6aaa;
  text-align: center;
  position: relative;
}

.styles .name, .cells .name {
  padding-right: 0;
}

.edit .name {
  padding-right: 48px;
}

.launch {
  position: absolute;
  right: 5px;
  top: 5px;
  width: 7px;
  height: 7px;
  border-top: 1px solid #6a8ab8;
  border-left: 1px solid #6a8ab8;
}

.launch::after {
  content: "";
  position: absolute;
  left: 2px;
  top: 2px;
  width: 5px;
  height: 5px;
  border-right: 2px solid #6a8ab8;
  border-bottom: 2px solid #6a8ab8;
}

.body {
  flex: 1;
  min-height: 0;
  display: flex;
}

.col {
  display: flex;
  flex-direction: column;
}

.body.col {
  padding: 3px 3px 2px;
  gap: 3px;
}

.big {
  display: flex;
  flex-direction: column;
  align-items: center;
  width: 44px;
  padding-top: 4px;
  gap: 5px;
  white-space: nowrap;
}

.clip .big {
  width: 47px;
}

.stack {
  display: flex;
  flex-direction: column;
  gap: 6px;
  padding-top: 4px;
}

.line {
  display: flex;
  gap: 3px;
  height: 22px;
}

.line.combos {
  height: 25px;
  gap: 0;
}

.combo {
  width: 46px;
  height: 24px;
  position: relative;
  background: #eaf2fb;
  border: 1px solid #abc7e9;
  color: #000;
}

.combo.wide { width: 97px; }
.combo.full { width: 81px; }

.combo select {
  appearance: none;
  width: 100%;
  height: 22px;
  padding-left: 2px;
}

.combo::after {
  content: "";
  position: absolute;
  right: 4px;
  top: 10px;
  border: 3px solid transparent;
  border-top: 4px solid #5a7db8;
  border-bottom: 0;
}

.set {
  display: flex;
  border: 1px solid #98b6dc;
  border-radius: 2px;
  background: linear-gradient(#dce8f6, #c6d9ef);
}

.set button {
  min-width: 22px;
  display: flex;
  align-items: center;
  justify-content: center;
  gap: 4px;
  padding: 0 3px;
  color: #222;
}

.set button + button {
  border-left: 1px solid #b4cbe8;
}

.set .hot {
  background: linear-gradient(#fcd9a0, #f9b24c 50%, #fdd878);
}

.set .at-top {
  align-items: flex-start;
  padding-top: 3px;
}

.set .at-bottom {
  align-items: flex-end;
  padding-bottom: 2px;
}

.set .merge {
  padding: 0 2px;
}

.set .b, .set .i, .set .u, .set .serif {
  font: bold 15px/18px "Liberation Serif", serif;
}

.set .i {
  font-style: italic;
}

.set .u {
  width: 34px;
  gap: 6px;
  text-decoration: underline;
}

.set .small {
  font-size: 13px;
}

.font .set .b, .font .set .i {
  width: 22px;
}

.up {
  align-self: flex-start;
  margin: 3px 0 0 -4px;
  border: 3px solid transparent;
  border-bottom: 3px solid #2a58a8;
  border-top: 0;
}

.up.down {
  border-top: 3px solid #2a58a8;
  border-bottom: 0;
}

.set .ink span {
  width: 16px;
  border-bottom: 4px solid #e01010;
  font: bold 14px/13px "Liberation Serif", serif;
  color: #2a508f;
  text-align: center;
}

.set .wen {
  display: grid;
  grid-template-columns: 20px 6px;
  gap: 0 3px;
  align-content: center;
  font-size: 9px;
  line-height: 9px;
  text-align: center;
}

.wen span {
  grid-column: 1;
}

.wen .dd {
  grid-column: 2;
  grid-row: 1 / 3;
}

.rows {
  width: 14px;
  height: 8px;
}

.al {
  width: 14px;
  height: 13px;
}

.number .set .b, .number .set .pc {
  width: 23px;
}

.tiny button {
  font: bold 9px/9px "Liberation Sans", sans-serif;
}

.cmds button {
  height: 22px;
  display: flex;
  align-items: center;
  gap: 3px;
  padding-left: 1px;
  white-space: nowrap;
}

.cmds .dd {
  margin-left: 2px;
}

.body.col.cmds {
  gap: 0;
}

.edit .cmds {
  width: 36px;
  padding: 3px 0 0 3px;
}

.edit .b {
  font-weight: bold;
  font-size: 15px;
  color: #111;
  padding-left: 4px;
}

.sort span {
  line-height: 17px;
}

.sort .dd {
  vertical-align: middle;
}

.formula {
  display: flex;
  height: 28px;
  padding: 4px 0;
  background: #d0e2f6;
  font: 15px/20px "Liberation Serif", "Noto Sans CJK SC", serif;
  color: #000;
}

.ref {
  width: 160px;
  background: #fff;
  border-top: 1px solid #6a8fc4;
  border-bottom: 1px solid #6a8fc4;
  padding-right: 20px;
  text-align: center;
  line-height: 18px;
  position: relative;
}

.ref i {
  position: absolute;
  right: 5px;
  top: 7px;
  border: 4px solid transparent;
  border-top: 4px solid #000;
  border-bottom: 0;
}

.fx {
  width: 77px;
  display: flex;
  justify-content: space-between;
  align-items: center;
  padding: 0 6px 0 5px;
  background: linear-gradient(#e8f2fd, #b4cff0);
  border: 1px solid #8aa8d4;
  border-radius: 10px 0 0 10px;
}

.fx i {
  width: 8px;
  height: 8px;
  border-radius: 50%;
  background: #a8bedc;
}

.fx sub {
  font-size: 10px;
}

.formula input {
  flex: 1;
  background: #fff;
  border-top: 1px solid #6a8fc4;
  border-bottom: 1px solid #6a8fc4;
  padding-left: 9px;
  height: 20px;
}

.sheet {
  height: 609px;
  overflow: hidden;
  position: relative;
  background: #fff;
}

table {
  table-layout: fixed;
  width: 737px;
  border-collapse: separate;
  border-spacing: 0;
  font: 13px/16px "Liberation Serif", "Noto Sans CJK SC", serif;
  color: #000;
}

.c0 { width: 33px; }
.ca { width: 57px; }
.cb { width: 38px; }
.cc { width: 166px; }
.cd { width: 31px; }
.ce { width: 81px; }
.cf { width: 54px; }
.cg { width: 49px; }
.ch { width: 89px; }
.ci { width: 139px; }

th {
  font-weight: normal;
  font-size: 16px;
  line-height: 18px;
  padding: 0;
  background: #e4ecf7;
  border-right: 1px solid #9eb6ce;
  border-bottom: 1px solid #9eb6ce;
  color: #27413e;
}

thead th {
  height: 19px;
  background: linear-gradient(#f6fafe, #d3dbe9);
}

tbody th {
  vertical-align: bottom;
}

th.sel {
  background: linear-gradient(#f9d99f, #f1c15f);
  border-color: #f29536;
}

tbody th.sel {
  background: #ffd58d;
}

.corner {
  background: linear-gradient(135deg, #a9c4e9 60%, #e4ecf7 60%);
}

td {
  padding: 0 1px;
  border-right: 1px solid #000;
  border-bottom: 1px solid #000;
  vertical-align: middle;
  white-space: nowrap;
  overflow: hidden;
}

.h34 { height: 34px; }
.h45 { height: 45px; }
.h40 { height: 40px; }
.h77 { height: 77px; }
.h6 { height: 6px; line-height: 0; }

.h6 th, .h6 td {
  border-bottom: 0;
  line-height: 0;
}

.num {
  text-align: center;
  font-size: 17px;
  font-weight: bold;
}

.num.plain {
  font-weight: normal;
}

.head {
  text-align: center;
  font-size: 17px;
  line-height: 19px;
  font-weight: bold;
}

.confirm {
  color: #0000e0;
  font-size: 17px;
  line-height: 19px;
  font-weight: bold;
  white-space: normal;
  vertical-align: top;
  padding-left: 3px;
}

.mark {
  background: #ff0;
}

.active {
  box-shadow: inset 0 1px #000, inset 0 3px #fff, inset 0 -2px #fff, inset 0 -3px #000;
}

/* highlighted cell */
.note {
  position: absolute;
  left: 98px;
  top: 288px;
  width: 461px;
  height: 36px;
  border: 2px solid #ec18ec;
  box-shadow: 2px 2px 4px rgba(0, 0, 0, 0.5), inset 2px 2px 4px rgba(0, 0, 0, 0.3);
}

.sheettabs {
  height: 17px;
  display: flex;
  background: #bcd3f0;
  font: 15px/17px "Liberation Serif", "Noto Sans CJK SC", serif;
  color: #1f3f7a;
}

.arrows {
  width: 62px;
  padding-left: 5px;
  display: flex;
  align-items: center;
  border-top: 1px solid #8aa8d4;
}

.sheettabs a {
  flex: none;
  width: 79px;
  padding-left: 6px;
  text-align: center;
  white-space: nowrap;
  overflow: hidden;
  background: linear-gradient(120deg, #bcd3f0 8px, #7894c0 8px, #7894c0 9px, #dce8f6 9px);
}

.sheettabs a.on {
  width: 44px;
  padding: 0;
  background: #fff;
}

.sheettabs a.cut {
  width: 44px;
  text-align: left;
  padding-left: 12px;
}

.hscroll {
  flex: 1;
  display: flex;
  align-items: center;
  gap: 6px;
  padding-left: 8px;
  background: #7794c4;
}

.la {
  border: 5px solid transparent;
  border-right-color: #1f3f7a;
  border-left: 0;
}

.knob {
  width: 27px;
  height: 15px;
  border: 1px solid #556a90;
  border-radius: 2px;
  background: repeating-linear-gradient(90deg, #778 0, #778 1px, transparent 1px, transparent 2px) center / 8px 7px no-repeat, linear-gradient(#f4f4f4, #c0c4cc);
}

.xlstatus {
  height: 21px;
  display: flex;
  align-items: center;
  background: linear-gradient(#d6e6fa, #b0cdf4 45%, #98bcf0 46%, #bfdbff);
}

.ready {
  padding-left: 6px;
  width: 40px;
  border-right: 1px solid #90b0dc;
}

.views {
  margin-left: 485px;
  display: flex;
  border: 1px solid #7c9ccc;
  border-radius: 2px;
}

.views svg:first-child {
  background: #fbcf78;
}

.xlstatus label {
  margin-left: 9px;
  width: 38px;
}

.minus {
  flex: none;
  width: 14px;
  height: 14px;
  margin-left: 4px;
  border: 1px solid #445a88;
  border-radius: 50%;
  background: linear-gradient(#445a88, #445a88) center / 7px 2px no-repeat, #e4ecf8;
}

.xlstatus input {
  appearance: none;
  flex: none;
  width: 120px;
  height: 16px;
  background: linear-gradient(#5a78b0, #5a78b0) center / 100% 1px no-repeat;
}

.xlstatus input::-webkit-slider-thumb {
  appearance: none;
  width: 9px;
  height: 13px;
  border: 1px solid #445a88;
  border-radius: 1px 1px 5px 5px;
  background: #e4ecf8;
}

/* ---------- taskbar ---------- */
.taskbar {
  height: 30px;
  flex: none;
  display: flex;
  align-items: stretch;
  gap: 3px;
  background: linear-gradient(#3a4248, #12161a 3px, #04060a);
  color: #fff;
  font: 12px/28px "Open Sans", "Noto Sans CJK SC", sans-serif;
}

.start {
  width: 50px;
  margin-top: -5px;
  padding-left: 4px;
  display: flex;
  justify-content: center;
}

.quick {
  width: 156px;
  display: flex;
  align-items: center;
  justify-content: space-around;
}

.quick.two {
  width: 80px;
  padding-left: 4px;
}

.quick svg, .tray svg {
  width: 17px;
  height: 17px;
}

.tasks {
  display: flex;
}

.tasks button {
  width: 83px;
  display: flex;
  align-items: center;
  gap: 4px;
  padding-left: 6px;
  white-space: nowrap;
  overflow: hidden;
  border: 1px solid #70777c;
  border-radius: 2px;
  background: linear-gradient(135deg, #74797e, #2a2e32 55%, #16191c);
}

.tasks .on {
  background: linear-gradient(135deg, #b8bcc0, #7c8084 60%, #686c70);
}

.tasks svg {
  flex: none;
  width: 16px;
  height: 16px;
}

.tray {
  flex: 1;
  display: flex;
  align-items: center;
  justify-content: space-between;
  padding: 0 24px 0 14px;
}

.tray time {
  margin-left: 14px;
}

.peek {
  width: 3px;
  background: #4a5258;
}
```
